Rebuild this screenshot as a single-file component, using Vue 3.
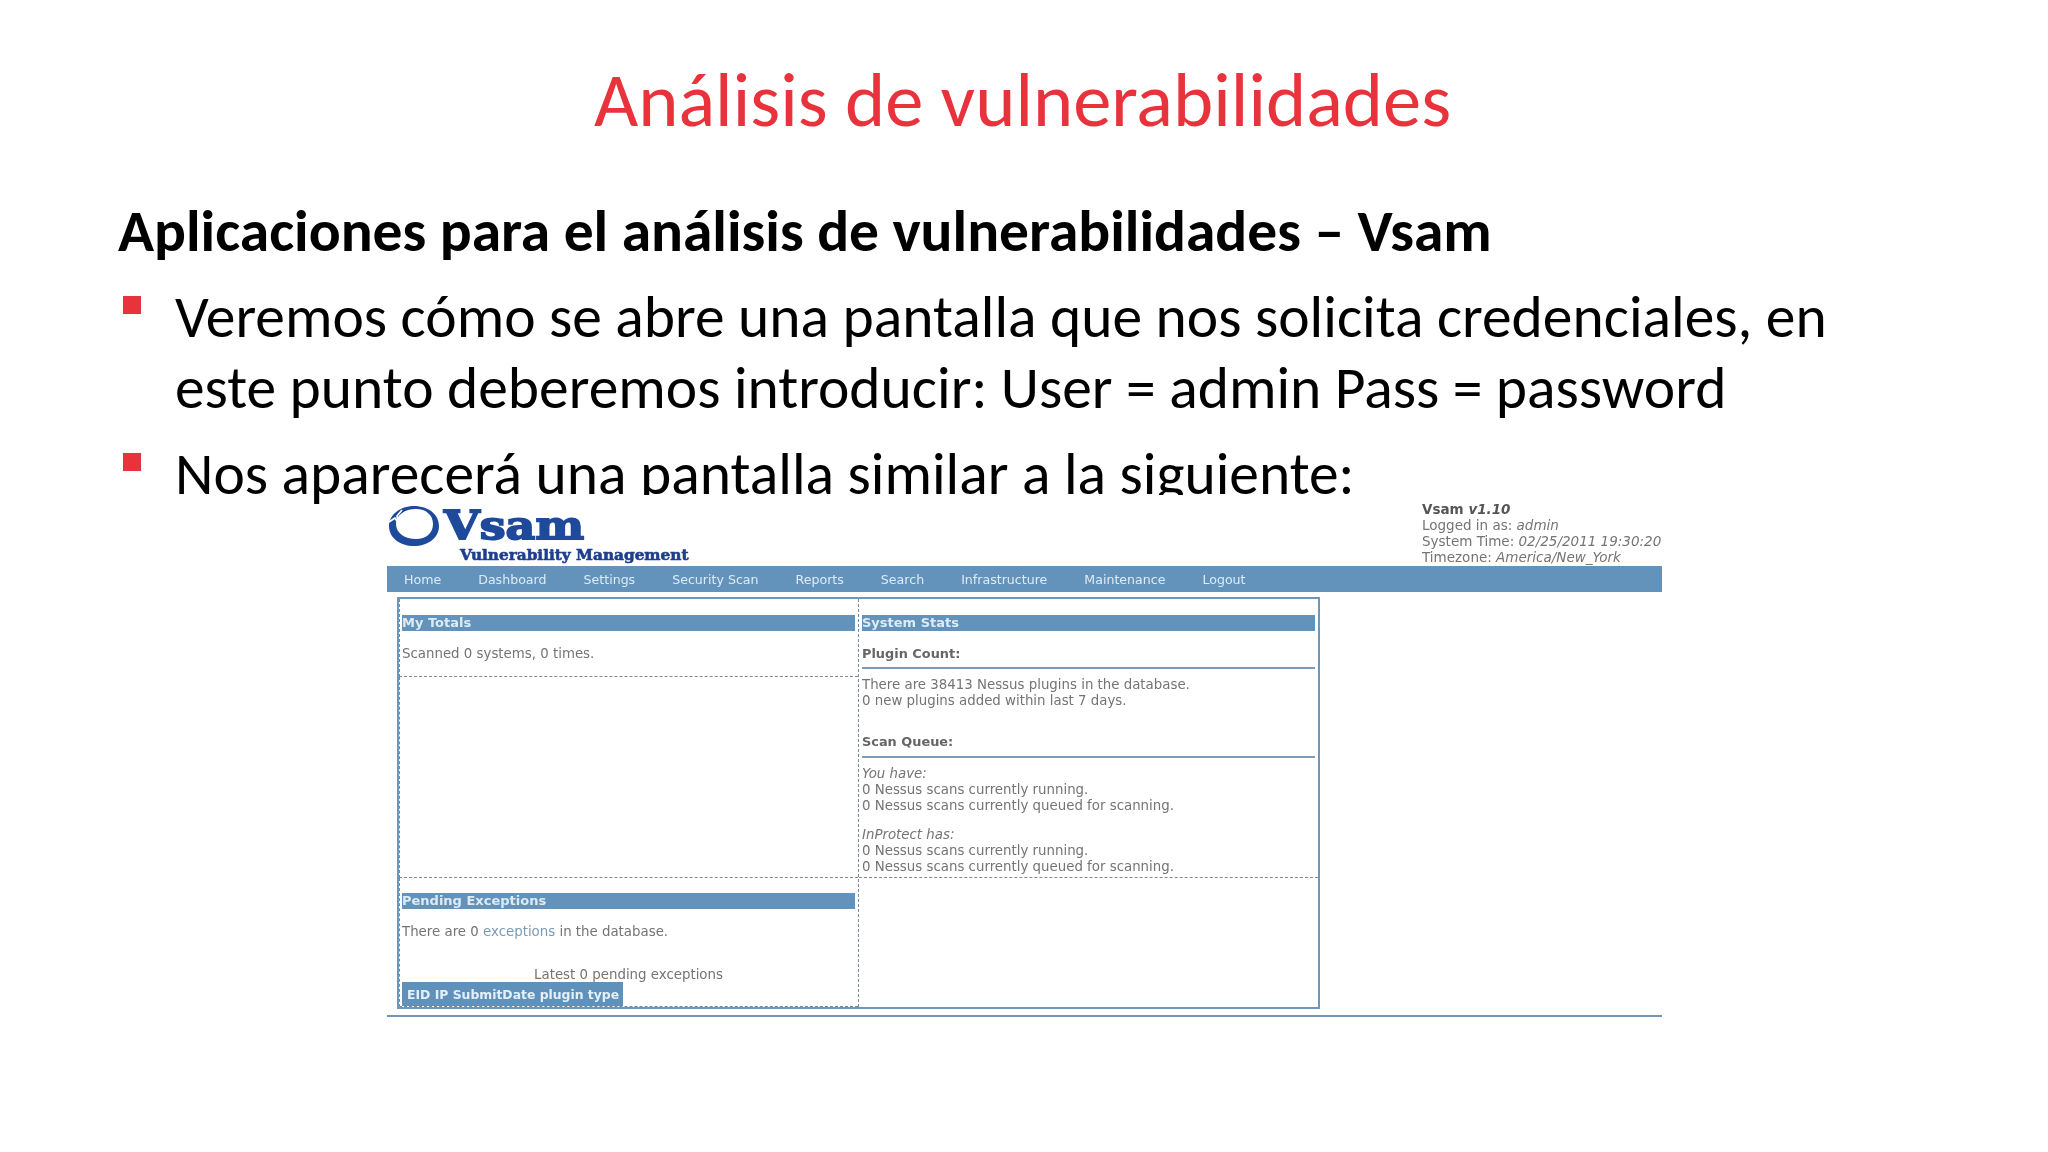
<script setup>
const nav = ['Home', 'Dashboard', 'Settings', 'Security Scan', 'Reports', 'Search', 'Infrastructure', 'Maintenance', 'Logout']
</script>

<template>
  <div class="slide">
    <h1 class="title">Análisis de vulnerabilidades</h1>
    <div class="body">
      <p class="lead">Aplicaciones para el análisis de vulnerabilidades – Vsam</p>
      <div class="item">
        <span class="bullet"></span>
        <p>Veremos cómo se abre una pantalla que nos solicita credenciales, en<br />este punto deberemos introducir: User = admin Pass = password</p>
      </div>
      <div class="item">
        <span class="bullet"></span>
        <p>Nos aparecerá una pantalla similar a la siguiente:</p>
      </div>
    </div>

    <div class="shot">
      <div class="head">
        <div class="brand">
          <div class="brand-top">
            <svg class="logo" viewBox="0 0 52 40" width="52" height="40">
              <path d="M26 0 C40 0 51 8 51 20 C51 32 40 40 26 40 C12 40 1 32 1 20 C1 9 12 0 26 0 Z M28 3 C17 3 8 9 8 18 C8 27 17 33 28 33 C38 33 45 27 45 18 C45 9 38 3 28 3 Z" fill="#1f4a9c" fill-rule="evenodd" />
              <path d="M1 16 L7 12 L10 17 L9 10 L14 4" fill="none" stroke="#fff" stroke-width="1.6" />
            </svg>
            <span class="vsam">Vsam</span>
          </div>
          <div class="tagline">Vulnerability Management</div>
        </div>
        <div class="info">
          <div><b>Vsam <i>v1.10</i></b></div>
          <div>Logged in as: <i>admin</i></div>
          <div>System Time: <i>02/25/2011 19:30:20</i></div>
          <div>Timezone: <i>America/New_York</i></div>
        </div>
      </div>
      <nav class="nav">
        <span v-for="n in nav" :key="n">{{ n }}</span>
      </nav>
      <div class="frame">
        <div class="col col-left">
          <section class="cell cell-totals">
            <div class="bar">My Totals</div>
            <div class="txt first">Scanned 0 systems, 0 times.</div>
          </section>
          <section class="cell cell-empty"></section>
          <section class="cell cell-pending">
            <div class="bar">Pending Exceptions</div>
            <div class="txt first">There are 0 <span class="link">exceptions</span> in the database.</div>
            <div class="txt latest">Latest 0 pending exceptions</div>
            <div class="thead">EID IP SubmitDate plugin type</div>
          </section>
        </div>
        <div class="col col-right">
          <section class="cell cell-stats">
            <div class="bar">System Stats</div>
            <div class="sub">Plugin Count:</div>
            <div class="txt">There are 38413 Nessus plugins in the database.</div>
            <div class="txt">0 new plugins added within last 7 days.</div>
            <div class="sub sub2">Scan Queue:</div>
            <div class="txt"><i>You have:</i></div>
            <div class="txt">0 Nessus scans currently running.</div>
            <div class="txt">0 Nessus scans currently queued for scanning.</div>
            <div class="txt gap"><i>InProtect has:</i></div>
            <div class="txt">0 Nessus scans currently running.</div>
            <div class="txt">0 Nessus scans currently queued for scanning.</div>
          </section>
        </div>
      </div>
      <div class="rule"></div>
    </div>
  </div>
</template>

<style>
html, body { margin: 0; background: #fff; }
</style>

<style scoped>
.slide {
  position: relative;
  width: 2048px;
  height: 1152px;
  overflow: hidden;
  background: #fff;
  font-family: Carlito, Lato, "Liberation Sans", sans-serif;
  color: #000;
}
.title {
  margin: 0;
  padding: 60px 3px 0 0;
  height: 80px;
  line-height: 80px;
  text-align: center;
  font-size: 76.55px;
  font-weight: 400;
  color: #e8323c;
}
.body {
  padding: 55px 0 0 118px;
  font-size: 59.5px;
  line-height: 71px;
}
.lead { margin: 0 0 15px; font-weight: 700; }
.item { display: flex; margin-bottom: 15px; }
.item p { margin: 0; white-space: nowrap; }
.bullet {
  flex: none;
  width: 18px;
  height: 18px;
  margin: 15px 34px 0 5px;
  background: #e8323c;
}
.shot {
  position: absolute;
  left: 385px;
  top: 495px;
  width: 1277px;
  height: 540px;
  background: #fff;
  font-family: "DejaVu Sans", sans-serif;
  font-size: 13.35px;
  color: #747474;
  filter: blur(0.6px);
}
.head {
  height: 71px;
  display: flex;
  justify-content: space-between;
}
.brand { padding: 11px 0 0 3px; }
.brand-top { display: flex; align-items: flex-start; gap: 4px; height: 42px; }
.vsam {
  font-family: "DejaVu Serif", serif;
  font-weight: 700;
  font-size: 40px;
  line-height: 38px;
  color: #1f4a9c;
  -webkit-text-stroke: 1.8px #1f4a9c;
  transform: scaleX(1.15);
  transform-origin: left;
}
.tagline {
  margin-left: 72px;
  font-family: "DejaVu Serif", serif;
  font-weight: 700;
  font-size: 15.3px;
  line-height: 14px;
  color: #1f3f8c;
  -webkit-text-stroke: 0.6px #1f3f8c;
  white-space: nowrap;
}
.info { flex: none; padding-top: 6px; width: 240px; font-size: 13.5px; line-height: 16px; color: #747474; white-space: nowrap; }
.info b { color: #555; }
.nav {
  margin-left: 2px;
  height: 26px;
  display: flex;
  align-items: center;
  gap: 37px;
  padding-left: 17px;
  font-size: 12.6px;
  background: #6393bb;
  color: #dcebf6;
  white-space: nowrap;
}
.frame {
  margin: 5px 0 0 12px;
  width: 923px;
  height: 412px;
  box-sizing: border-box;
  border: 2px solid #7097b7;
  display: flex;
}
.col { display: flex; flex-direction: column; }
.col-left { width: 459px; }
.col-right { flex: 1; border-left: 1px dashed #7b8a96; }
.cell { padding: 15px 3px 0 2px; border-bottom: 1px dashed #888; box-sizing: border-box; }
.cell-totals, .cell-stats { padding-top: 16px; }
.col-left .cell { border-left: 1px dashed #888; }
.col-right .cell { padding-left: 3px; }
.cell-totals { height: 78px; }
.cell-empty { height: 203px; padding: 0; }
.cell-pending { height: 129px; border-bottom-color: #6f8ba3; }
.cell-stats { height: 279px; }
.bar {
  height: 16px;
  line-height: 16px;
  background: #6393bb;
  color: #dcebf6;
  font-weight: 700;
  font-size: 13px;
}
.txt { line-height: 16px; white-space: nowrap; }
.first { margin-top: 15px; }
.latest { margin-top: 27px; text-align: center; }
.link { color: #7a9ab5; }
.thead {
  margin-top: -1px;
  width: 221px;
  height: 24px;
  line-height: 26px;
  box-sizing: border-box;
  padding-left: 5px;
  background: #5f91bb;
  color: #e4f0f8;
  font-weight: 700;
  font-size: 12.4px;
  white-space: nowrap;
}
.sub {
  margin-top: 15px;
  height: 21px;
  line-height: 16px;
  border-bottom: 2px solid #7d9cb7;
  margin-bottom: 8px;
  font-weight: 700;
  font-size: 12.9px;
  color: #666;
}
.sub2 { margin-top: 25px; height: 22px; }
.gap { margin-top: 13px; }
.rule {
  margin: 6px 0 0 2px;
  height: 2px;
  background: #7097b7;
}
</style>
